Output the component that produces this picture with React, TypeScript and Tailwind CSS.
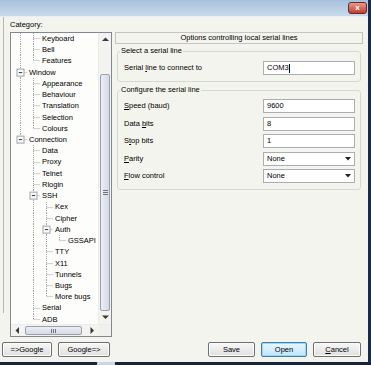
import React from 'react';

type Cell = 'none' | 'pass' | 'tee' | 'end' | 'boxmid' | 'boxend';

interface TreeRow {
  label: string;
  cells: Cell[];
}

const H = 11.24;

const rows: TreeRow[] = [
  { label: 'Keyboard', cells: ['pass', 'tee'] },
  { label: 'Bell', cells: ['pass', 'tee'] },
  { label: 'Features', cells: ['pass', 'end'] },
  { label: 'Window', cells: ['boxmid'] },
  { label: 'Appearance', cells: ['pass', 'tee'] },
  { label: 'Behaviour', cells: ['pass', 'tee'] },
  { label: 'Translation', cells: ['pass', 'tee'] },
  { label: 'Selection', cells: ['pass', 'tee'] },
  { label: 'Colours', cells: ['pass', 'end'] },
  { label: 'Connection', cells: ['boxend'] },
  { label: 'Data', cells: ['none', 'tee'] },
  { label: 'Proxy', cells: ['none', 'tee'] },
  { label: 'Telnet', cells: ['none', 'tee'] },
  { label: 'Rlogin', cells: ['none', 'tee'] },
  { label: 'SSH', cells: ['none', 'boxmid'] },
  { label: 'Kex', cells: ['none', 'pass', 'tee'] },
  { label: 'Cipher', cells: ['none', 'pass', 'tee'] },
  { label: 'Auth', cells: ['none', 'pass', 'boxmid'] },
  { label: 'GSSAPI', cells: ['none', 'pass', 'pass', 'end'] },
  { label: 'TTY', cells: ['none', 'pass', 'tee'] },
  { label: 'X11', cells: ['none', 'pass', 'tee'] },
  { label: 'Tunnels', cells: ['none', 'pass', 'tee'] },
  { label: 'Bugs', cells: ['none', 'pass', 'tee'] },
  { label: 'More bugs', cells: ['none', 'pass', 'end'] },
  { label: 'Serial', cells: ['none', 'tee'] },
  { label: 'ADB', cells: ['none', 'end'] },
];

const font = { fontFamily: '"Liberation Sans", Arial, sans-serif' };

const TreeCell: React.FC<{ type: Cell }> = ({ type }) => {
  const mid = H / 2;
  const full = type === 'pass' || type === 'tee' || type === 'boxmid';
  const half = type === 'end' || type === 'boxend';
  const horiz = type !== 'none' && type !== 'pass';
  const box = type === 'boxmid' || type === 'boxend';
  return (
    <svg width="13" height={H} className="shrink-0 block">
      {full && <line x1="6.5" y1="0" x2="6.5" y2={H} stroke="#a3a3a3" strokeWidth="1" strokeDasharray="1 1" />}
      {half && <line x1="6.5" y1="0" x2="6.5" y2={mid} stroke="#a3a3a3" strokeWidth="1" strokeDasharray="1 1" />}
      {horiz && <line x1="6.5" y1={mid} x2="13" y2={mid} stroke="#a3a3a3" strokeWidth="1" strokeDasharray="1 1" />}
      {box && (
        <g>
          <rect x="3" y={mid - 3.5} width="7" height="7" fill="#fdfdfb" stroke="#9aa3ad" strokeWidth="1" />
          <line x1="4.8" y1={mid} x2="8.2" y2={mid} stroke="#333" strokeWidth="1" />
        </g>
      )}
    </svg>
  );
};

const Arrow: React.FC<{ dir: 'up' | 'down' | 'left' | 'right' }> = ({ dir }) => {
  const pts = {
    up: '0,4 3.5,0.5 7,4',
    down: '0,0.5 3.5,4 7,0.5',
    left: '4,0 0.5,3.5 4,7',
    right: '0.5,0 4,3.5 0.5,7',
  }[dir];
  const w = dir === 'up' || dir === 'down' ? 7 : 4.5;
  const h = dir === 'up' || dir === 'down' ? 4.5 : 7;
  return (
    <svg width={w} height={h} className="block">
      <polygon points={pts} fill="#3a3a3a" />
    </svg>
  );
};

const Btn: React.FC<{ children: React.ReactNode; w: string; primary?: boolean }> = ({ children, w, primary }) => (
  <div
    className={`${w} h-[15px] flex items-center justify-center rounded-[2px] border text-[7.5px] text-black ${
      primary
        ? 'border-[#3c7fb1] bg-gradient-to-b from-[#eaf6fd] to-[#bee6fd] shadow-[inset_0_0_0_1px_#9fd6f5]'
        : 'border-[#707070] bg-gradient-to-b from-[#f7f7f7] to-[#e0e0e0] shadow-[inset_0_0_0_1px_#fbfbfb]'
    }`}
  >
    {children}
  </div>
);

const Field: React.FC<{ value: string; caret?: boolean }> = ({ value, caret }) => (
  <div className="w-[92px] h-[14px] bg-white border border-[#abadb3] flex items-center pl-[3px] text-[7.5px] text-black">
    {value}
    {caret && <span className="inline-block w-px h-[9px] bg-black ml-[0.5px]" />}
  </div>
);

const Combo: React.FC<{ value: string }> = ({ value }) => (
  <div className="w-[92px] h-[14px] bg-white border border-[#abadb3] flex items-center text-[7.5px] text-black">
    <span className="flex-1 pl-[3px]">{value}</span>
    <span className="w-[12px] flex items-center justify-center">
      <svg width="6" height="4" className="block">
        <polygon points="0,0 6,0 3,3.5" fill="#222" />
      </svg>
    </span>
  </div>
);

const Row: React.FC<{ label: React.ReactNode; children: React.ReactNode }> = ({ label, children }) => (
  <div className="flex items-center justify-between h-[14px]">
    <span className="text-[7.5px] text-black">{label}</span>
    {children}
  </div>
);

export default function App() {
  return (
    <div className="w-[371px] h-[365px] flex flex-col bg-[#f4f4ee] overflow-hidden" style={font}>
      <div className="flex flex-1 min-h-0">
        <div className="flex-1 flex flex-col min-w-0">
          {/* title bar */}
          <div className="h-[17px] shrink-0 bg-gradient-to-b from-[#a7c0db] to-[#c9daec] border-b border-[#e6eef6] flex items-start justify-end pr-[1px] pt-[2px]">
            <div className="w-[19px] h-[12px] rounded-[3px] border border-[#6b2a24] bg-gradient-to-b from-[#e59b8c] to-[#c23a2c] flex items-center justify-center text-white text-[8px] font-bold leading-none">
              x
            </div>
          </div>

          <div className="flex-1 flex min-h-0">
            {/* left column */}
            <div className="w-[112px] shrink-0 flex flex-col">
              <div className="flex flex-1 min-h-0">
                <div className="w-[3px]" />
                <div className="w-px bg-[#b8b8b2] mb-[24px]" />
                <div className="w-[6px]" />
                <div className="flex-1 flex flex-col pt-[3px]">
                  <div className="h-[10px] leading-[10px] text-[7.5px] text-black">Category:</div>
                  <div className="mt-[2px] h-[305px] border border-[#828790] bg-[#fdfdfb] flex flex-col">
                    <div className="flex flex-1 min-h-0">
                      <div className="flex-1 overflow-hidden pl-[2.5px]">
                        {rows.map((r) => (
                          <div key={r.label} className="flex items-center h-[11.24px]">
                            {r.cells.map((c, i) => (
                              <TreeCell key={i} type={c} />
                            ))}
                            <span className="ml-[2.5px] text-[7.5px] text-black whitespace-nowrap leading-none">{r.label}</span>
                          </div>
                        ))}
                      </div>
                      {/* vertical scrollbar */}
                      <div className="w-[13px] bg-[#f3f3f1] border-l border-[#ececea] flex flex-col">
                        <div className="h-[12px] flex items-center justify-center">
                          <Arrow dir="up" />
                        </div>
                        <div className="h-[29px]" />
                        <div className="h-[237px] mx-[1px] rounded-[2px] border border-[#9ba0ab] bg-gradient-to-r from-[#eceef4] to-[#d6dae5] flex items-center justify-center">
                          <div className="flex flex-col gap-[1px]">
                            <div className="w-[5px] h-px bg-[#6e7480]" />
                            <div className="w-[5px] h-px bg-[#6e7480]" />
                            <div className="w-[5px] h-px bg-[#6e7480]" />
                          </div>
                        </div>
                        <div className="flex-1 flex items-center justify-center">
                          <Arrow dir="down" />
                        </div>
                      </div>
                    </div>
                    {/* horizontal scrollbar */}
                    <div className="h-[12px] flex bg-[#f3f3f1] border-t border-[#ececea]">
                      <div className="w-[12px] flex items-center justify-center">
                        <Arrow dir="left" />
                      </div>
                      <div className="w-[2px]" />
                      <div className="w-[57px] my-[1px] rounded-[2px] border border-[#9ba0ab] bg-gradient-to-b from-[#eceef4] to-[#d6dae5] flex items-center justify-center gap-[1px]">
                        <div className="w-px h-[4px] bg-[#6e7480]" />
                        <div className="w-px h-[4px] bg-[#6e7480]" />
                        <div className="w-px h-[4px] bg-[#6e7480]" />
                      </div>
                      <div className="flex-1 flex items-center justify-end pr-[4px]">
                        <Arrow dir="right" />
                      </div>
                      <div className="w-[13px] bg-[#f0f0ee]" />
                    </div>
                  </div>
                </div>
              </div>
              <div className="flex gap-[6px] pl-[2px] pt-[5px] pb-[5px]">
                <Btn w="w-[50px]">=&gt;Google</Btn>
                <Btn w="w-[52px]">Google=&gt;</Btn>
              </div>
            </div>

            {/* right column */}
            <div className="flex-1 flex flex-col ml-[3px] mr-[5px] pt-[15px] pb-[5px]">
              <div className="h-[12px] border border-[#c5c5bf] flex items-center justify-center text-[7.5px] text-black">
                Options controlling local serial lines
              </div>

              <fieldset className="mx-[2px] mt-[2px] border border-[#d5d9d6] rounded-[3px] pl-[6px] pr-[5px] pt-[5px] pb-[6px]">
                <legend className="text-[7.5px] leading-[10px] text-black px-[1px] -ml-[4px]">Select a serial line</legend>
                <Row
                  label={
                    <>
                      Serial <span className="underline">l</span>ine to connect to
                    </>
                  }
                >
                  <Field value="COM3" caret />
                </Row>
              </fieldset>

              <fieldset className="mx-[2px] mt-[3px] border border-[#d5d9d6] rounded-[3px] pl-[6px] pr-[5px] pt-[4px] pb-[6px]">
                <legend className="text-[7.5px] leading-[10px] text-black px-[1px] -ml-[4px]">Configure the serial line</legend>
                <div className="flex flex-col gap-[3.5px]">
                  <Row
                    label={
                      <>
                        <span className="underline">S</span>peed (baud)
                      </>
                    }
                  >
                    <Field value="9600" />
                  </Row>
                  <Row
                    label={
                      <>
                        Data <span className="underline">b</span>its
                      </>
                    }
                  >
                    <Field value="8" />
                  </Row>
                  <Row
                    label={
                      <>
                        S<span className="underline">t</span>op bits
                      </>
                    }
                  >
                    <Field value="1" />
                  </Row>
                  <Row
                    label={
                      <>
                        <span className="underline">P</span>arity
                      </>
                    }
                  >
                    <Combo value="None" />
                  </Row>
                  <Row
                    label={
                      <>
                        <span className="underline">F</span>low control
                      </>
                    }
                  >
                    <Combo value="None" />
                  </Row>
                </div>
              </fieldset>

              <div className="flex-1" />
              <div className="flex justify-end gap-[6px] pr-[2px]">
                <Btn w="w-[47px]">Save</Btn>
                <Btn w="w-[46px]" primary>
                  Open
                </Btn>
                <Btn w="w-[48px]">
                  <span className="underline">C</span>ancel
                </Btn>
              </div>
            </div>
          </div>
        </div>
        {/* dark right edge */}
        <div className="w-[3px] bg-[#1c2a44]" />
      </div>
      <div className="h-[3px] shrink-0 bg-[#182338] flex">
        <div className="ml-[97px] w-[18px] bg-[#c9d6e6]" />
      </div>
    </div>
  );
}
